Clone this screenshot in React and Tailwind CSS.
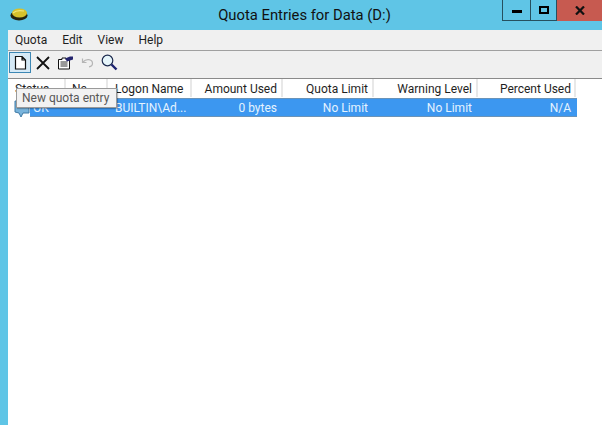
import React from "react";

const font = { fontFamily: 'Roboto,"Noto Sans",sans-serif' };

const cols = [
  { label: "Status", w: "w-[58px]", cls: "justify-start pl-[7px]" },
  { label: "Na", w: "w-[42px]", cls: "justify-start pl-[6px]" },
  { label: "Logon Name", w: "w-[84px]", cls: "justify-start pl-[7px]" },
  { label: "Amount Used", w: "w-[91px]", cls: "justify-end pr-[4px]" },
  { label: "Quota Limit", w: "w-[91px]", cls: "justify-end pr-[4px]" },
  { label: "Warning Level", w: "w-[104px]", cls: "justify-end pr-[4px]" },
  { label: "Percent Used", w: "w-[98px]", cls: "justify-end pr-[3px]" },
];

export default function App() {
  return (
    <div className="w-[602px] h-[425px] overflow-hidden flex flex-col bg-[#5fc5e6] text-[12px] text-[#1f1f1f]" style={font}>
      <div className="h-[30px] flex items-start shrink-0 relative">
        <div className="w-[38px] h-[30px] flex items-center justify-center pb-[1px]">
          <svg width="18" height="13" viewBox="0 0 18 13">
            <ellipse cx="9" cy="7.5" rx="8.5" ry="5" fill="#26240f" />
            <ellipse cx="9.5" cy="5" rx="7.5" ry="4.5" fill="#d7c22c" />
            <path d="M3 5 C5 3 9 2 14 3" stroke="#f1e67a" strokeWidth="1.2" fill="none" />
          </svg>
        </div>
        <div className="flex-1 text-center text-[14.8px] leading-[30px] text-[#111] pl-[69px]">Quota Entries for Data (D:)</div>
        <div className="h-[21px] flex">
          <div className="w-[29px] h-[21px] border border-t-0 border-[#26505f] flex items-center justify-center">
            <div className="w-[10px] h-[3px] bg-black mt-[3px]"></div>
          </div>
          <div className="w-[26px] h-[21px] border-b border-r border-[#26505f] flex items-center justify-center">
            <div className="w-[10px] h-[8px] border-2 border-black mb-[1px]"></div>
          </div>
          <div className="w-[45px] h-[21px] bg-[#c75a50] flex items-center justify-center">
            <svg width="10" height="9" viewBox="0 0 10 9">
              <path d="M1 0.5 L9 8.5 M9 0.5 L1 8.5" stroke="#111" strokeWidth="2.2" />
            </svg>
          </div>
        </div>
      </div>

      <div className="flex-1 ml-[8px] flex flex-col bg-white min-h-0 relative">
        <div className="h-[21px] bg-[#f0f0f0] flex items-center gap-[15px] pl-[7px] border-b border-[#a0a0a0] shrink-0">
          <span>Quota</span>
          <span>Edit</span>
          <span>View</span>
          <span>Help</span>
        </div>
        <div className="h-[27px] bg-[#f0f0f0] flex items-start pt-[1px] pl-[1px] shrink-0">
          <div className="w-[22px] h-[21px] bg-[#d5e9f6] border border-[#3d87b4] flex items-center justify-center">
            <svg width="13" height="14" viewBox="0 0 13 14">
              <path d="M1.5 0.5 H8 L11.5 4 V13 H1.5 Z M8 0.5 V4 H11.5" fill="#fff" stroke="#111" strokeWidth="1.2" />
            </svg>
          </div>
          <div className="w-[22px] h-[21px] flex items-center justify-center ml-[1px]">
            <svg width="14" height="14" viewBox="0 0 14 14">
              <path d="M1 1 L13 13 M13 1 L1 13" stroke="#111" strokeWidth="1.8" />
            </svg>
          </div>
          <div className="w-[22px] h-[21px] flex items-center justify-center">
            <svg width="17" height="15" viewBox="0 0 17 15">
              <path d="M1.5 4.5 H5 V3 H9 V4.5 H12.5 V14 H1.5 Z" fill="#fff" stroke="#111" />
              <path d="M3.5 7 H10.5 M3.5 9 H10.5 M3.5 11 H10.5" stroke="#333" />
              <path d="M8 3.5 L13 1.5 H16 V4.5 L10 6.5 Z" fill="#24246e" />
            </svg>
          </div>
          <div className="w-[22px] h-[21px] flex items-center justify-center">
            <svg width="13" height="11" viewBox="0 0 13 11">
              <path d="M1.5 1.5 V5.5 H5.5 M2 5 C5 1.5 11 2 11.5 6 C11.6 8 10 9.5 8 9.8" fill="none" stroke="#b5b5b5" strokeWidth="1.2" />
            </svg>
          </div>
          <div className="w-[22px] h-[21px] flex items-center justify-center">
            <svg width="17" height="17" viewBox="0 0 17 17">
              <circle cx="6.5" cy="6.5" r="5.3" fill="#e6f5fa" stroke="#1d2b4f" strokeWidth="1.2" />
              <path d="M10.5 10.5 L15.5 15.5" stroke="#1c2370" strokeWidth="2.4" />
            </svg>
          </div>
        </div>

        <div className="border-t border-[#8a8a8a] flex-1 bg-white min-h-0">
          <div className="h-[19px] flex">
            {cols.map((c) => (
              <div key={c.label} className={`${c.w} ${c.cls} h-[18px] pt-[1px] flex items-center border-r-2 border-[#e8e8e8] overflow-hidden whitespace-nowrap`}>
                {c.label}
              </div>
            ))}
          </div>
          <div className="h-[19px] w-[569px] flex text-[#e4f3ff] relative">
            <div className="w-[22px] shrink-0 flex items-start justify-start bg-white pl-[6px]">
              <svg width="16" height="20" viewBox="0 0 16 20">
                <path d="M1 3 H15 V15 L9 15 L7 19 L5 15 L1 14 Z" fill="#79b4dc" stroke="#3f7aa6" />
              </svg>
            </div>
            <div className="flex flex-1 bg-[#3c97f0] border-y border-[#6a93b8] items-center">
              <div className="w-[36px] pl-[3px]">OK</div>
              <div className="w-[42px]"></div>
              <div className="w-[84px] pl-[7px] whitespace-nowrap">BUILTIN\Ad...</div>
              <div className="w-[91px] text-right pr-[6px]">0 bytes</div>
              <div className="w-[91px] text-right pr-[6px]">No Limit</div>
              <div className="w-[104px] text-right pr-[6px]">No Limit</div>
              <div className="w-[98px] text-right pr-[5px]">N/A</div>
            </div>
          </div>
        </div>

        <div className="absolute left-[8px] top-[58px] w-[101px] h-[20px] pl-[5px] flex items-center bg-[#f2f2f2] border border-[#9a9a9a] text-[#575757] shadow-[1px_1px_1px_rgba(0,0,0,0.25)] whitespace-nowrap">
          New quota entry
        </div>
      </div>
    </div>
  );
}
